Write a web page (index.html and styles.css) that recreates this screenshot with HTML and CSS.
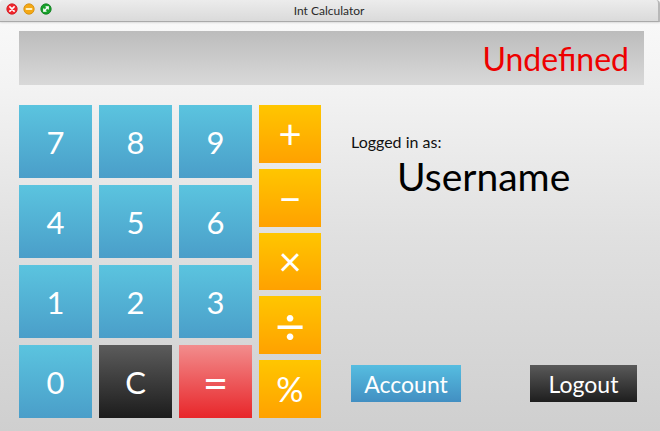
FILE: index.html
```html
<!DOCTYPE html>
<html>
<head>
<meta charset="utf-8">
<link rel="stylesheet" href="styles.css">
</head>
<body>
<div class="window">
  <div class="titlebar">
    <div class="lights">
      <svg class="light" viewBox="0 0 12 12" width="12" height="12"><circle cx="6" cy="6" r="5.2" fill="#f2262c" stroke="#c91a1f" stroke-width="0.8"/><path d="M3.9 3.9 L8.1 8.1 M8.1 3.9 L3.9 8.1" stroke="#fff" stroke-width="1.6" stroke-linecap="round"/></svg>
      <svg class="light" viewBox="0 0 12 12" width="12" height="12"><circle cx="6" cy="6" r="5.2" fill="#f4a814" stroke="#d08a08" stroke-width="0.8"/><path d="M3.5 6 H8.5" stroke="#fff2c0" stroke-width="1.8" stroke-linecap="round"/></svg>
      <svg class="light" viewBox="0 0 12 12" width="12" height="12"><circle cx="6" cy="6" r="5.2" fill="#17a12a" stroke="#0d7a1c" stroke-width="0.8"/><path d="M3.8 8.2 L8.2 3.8 M3.8 8.2 V6 M3.8 8.2 H6 M8.2 3.8 V6 M8.2 3.8 H6" stroke="#fff" stroke-width="1.3" stroke-linecap="round"/></svg>
    </div>
    <div class="title">Int Calculator</div>
  </div>
  <div class="content">
    <div class="display">Undefined</div>
    <div class="main">
      <div class="keypad">
        <div class="key num">7</div>
        <div class="key num">8</div>
        <div class="key num">9</div>
        <div class="key num">4</div>
        <div class="key num">5</div>
        <div class="key num">6</div>
        <div class="key num">1</div>
        <div class="key num">2</div>
        <div class="key num">3</div>
        <div class="key num">0</div>
        <div class="key dark">C</div>
        <div class="key red">=</div>
      </div>
      <div class="ops">
        <div class="key op">+</div>
        <div class="key op">−</div>
        <div class="key op">×</div>
        <div class="key op div">÷</div>
        <div class="key op pct">%</div>
      </div>
      <div class="panel">
        <div class="logged">Logged in as:</div>
        <div class="username">Username</div>
        <div class="actions">
          <div class="btn account">Account</div>
          <div class="btn logout">Logout</div>
        </div>
      </div>
    </div>
  </div>
</div>
</body>
</html>
```
FILE: styles.css
```css
html, body {
  margin: 0;
  padding: 0;
  width: 660px;
  height: 431px;
  overflow: hidden;
}
body {
  font-family: "Open Sans", "Lato", sans-serif;
  background: #d0d0d0;
}
.window {
  width: 660px;
  height: 431px;
  display: flex;
  flex-direction: column;
  background: linear-gradient(to bottom, #fafafa 0%, #f3f3f3 20%, #e0e0e0 55%, #cfcfcf 100%);
}
.titlebar {
  height: 21px;
  flex: none;
  position: relative;
  background: linear-gradient(to bottom, #ececec, #dadada);
  border-bottom: 1px solid #a9a9a9;
  border-right: 2px solid #b8b8b8;
  border-radius: 4px 4px 0 0;
  box-shadow: 0 1px 2px rgba(0,0,0,0.12);
  display: flex;
  align-items: center;
  justify-content: center;
}
.lights {
  position: absolute;
  left: 6px;
  top: 3px;
  display: flex;
  gap: 5px;
}
.light { display: block; }
.title {
  font-size: 12px;
  color: #2a2a2a;
  font-family: "Lato", "Open Sans", sans-serif;
}
.content {
  padding: 9px 16px 0 19px;
  display: flex;
  flex-direction: column;
}
.display {
  height: 54px;
  background: linear-gradient(to bottom, #bcbcbc, #d9d9d9);
  color: #ee0000;
  font-family: "Lato", sans-serif;
  font-size: 32px;
  display: flex;
  align-items: center;
  justify-content: flex-end;
  padding-right: 15px;
  box-sizing: border-box;
  margin-bottom: 20px;
}
.main {
  display: flex;
  height: 313px;
}
.keypad {
  display: grid;
  grid-template-columns: repeat(3, 73px);
  grid-template-rows: repeat(4, 73px);
  gap: 7px;
}
.key {
  display: flex;
  align-items: center;
  justify-content: center;
  color: #fff;
  font-family: "Lato", sans-serif;
  font-size: 31px;
}
.num { background: linear-gradient(to bottom, #5bc4df, #4a9ec9); }
.dark { background: linear-gradient(to bottom, #5c5c5c, #1c1c1c); }
.red { background: linear-gradient(to bottom, #f28d8d, #e8262a); font-size: 44px; }
.ops {
  margin-left: 7px;
  width: 62px;
  display: flex;
  flex-direction: column;
  gap: 6px;
}
.op {
  flex: 1 1 0;
  min-height: 0;
  background: linear-gradient(to bottom, #ffc600, #ffa100);
  font-size: 40px;
  line-height: 1;
}
.div {
  font-size: 52px;
}
.pct {
  font-size: 34px;
}
.panel {
  flex: 1;
  display: flex;
  flex-direction: column;
  padding: 0 7px 0 30px;
}
.logged {
  margin-top: 27px;
  font-family: "Lato", sans-serif;
  font-size: 16px;
  color: #111;
}
.username {
  margin-left: 46px;
  margin-top: 2px;
  font-family: "Lato", sans-serif;
  font-size: 39px;
  color: #000;
}
.actions {
  margin-top: auto;
  margin-bottom: 16px;
  display: flex;
  justify-content: space-between;
}
.btn {
  height: 37px;
  display: flex;
  align-items: center;
  justify-content: center;
  color: #fff;
  font-family: "Lato", sans-serif;
  font-size: 23px;
}
.account {
  width: 110px;
  background: linear-gradient(to bottom, #56bde0, #428fc2);
}
.logout {
  width: 107px;
  background: linear-gradient(to bottom, #5a5a5a, #1e1e1e);
}
```
